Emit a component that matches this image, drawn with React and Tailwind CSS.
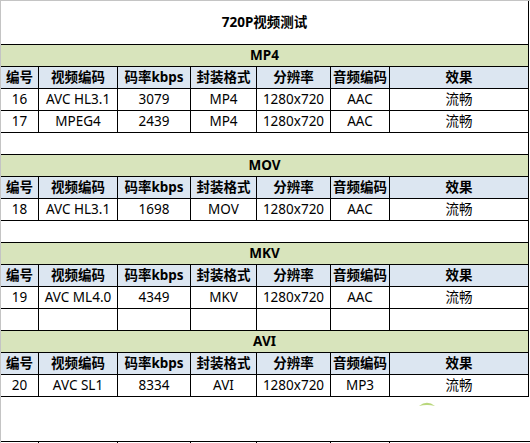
const sections = [
  {
    name: "MP4",
    rows: [
      ["16", "AVC HL3.1", "3079", "MP4", "1280x720", "AAC", "流畅"],
      ["17", "MPEG4", "2439", "MP4", "1280x720", "AAC", "流畅"],
    ],
    after: "gap",
  },
  {
    name: "MOV",
    rows: [["18", "AVC HL3.1", "1698", "MOV", "1280x720", "AAC", "流畅"]],
    after: "gap",
  },
  {
    name: "MKV",
    rows: [
      ["19", "AVC ML4.0", "4349", "MKV", "1280x720", "AAC", "流畅"],
      ["", "", "", "", "", "", ""],
    ],
  },
  {
    name: "AVI",
    rows: [["20", "AVC SL1", "8334", "AVI", "1280x720", "MP3", "流畅"]],
  },
];

const headers = ["编号", "视频编码", "码率kbps", "封装格式", "分辨率", "音频编码", "效果"];

const cols = "grid grid-cols-[38px_79px_73px_66px_74px_59px_138px]";

function Row({ cells, className = "", bold = false }) {
  return (
    <div className={`${cols} h-[22px] border-b border-black ${className}`}>
      {cells.map((c, i) => (
        <div
          key={i}
          className={`flex items-center justify-center whitespace-nowrap ${
            i < cells.length - 1 ? "border-r border-black" : ""
          } ${bold ? "font-bold" : ""}`}
        >
          {c}
        </div>
      ))}
    </div>
  );
}

export default function App() {
  return (
    <div
      className="relative h-[443px] w-[530px] overflow-hidden border-l border-t border-[#c4c4c4] bg-white text-[13.5px] leading-none text-black"
      style={{ fontFamily: '"Noto Sans", "Noto Sans CJK SC", sans-serif' }}
    >
      <div className="w-[528px] border-r border-black">
        <div className="flex h-[44px] items-center justify-center border-b border-black font-bold">
          720P视频测试
        </div>

        {sections.map((s) => (
          <div key={s.name}>
            <div className="flex h-[22px] items-center justify-center border-b border-black bg-[#d8e4bc] font-bold">
              {s.name}
            </div>
            <Row cells={headers} bold className="bg-[#dce6f1]" />
            {s.rows.map((r, i) => (
              <Row key={i} cells={r} />
            ))}
            {s.after === "gap" ? <div className="h-[22px] border-b border-black" /> : null}
          </div>
        ))}
      </div>

      <div className="h-[44px]" />

      <div className={`${cols} h-[22px] w-[529px] border-t border-black`}>
        {headers.map((_, i) => (
          <div key={i} className={i < headers.length - 1 ? "border-r border-black" : ""} />
        ))}
      </div>

      {/* little green mark left on the sheet */}
      <svg className="absolute left-[417px] top-[400px]" width="18" height="6" viewBox="0 0 18 6">
        <path d="M1 5 Q9 -1.5 17 5 Q9 3.2 1 5Z" fill="#b9d77c" />
      </svg>
    </div>
  );
}
